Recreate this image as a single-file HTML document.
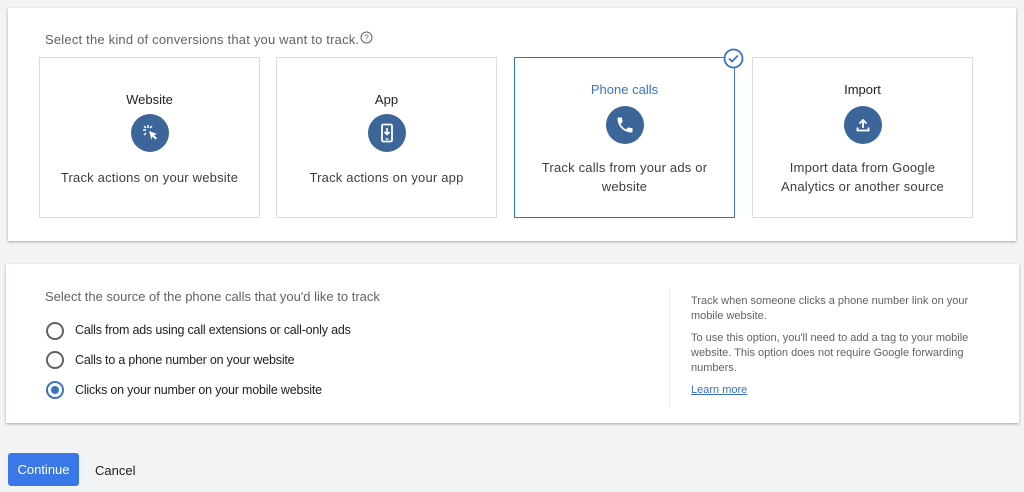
<!DOCTYPE html>
<html><head><style>
*{margin:0;padding:0;box-sizing:border-box}
body{width:1024px;height:492px;background:#f1f3f4;font-family:"Liberation Sans",Arial,sans-serif;position:relative;overflow:hidden;color:#3c4043}
.panel{position:absolute;background:#fff;box-shadow:0 1px 2px rgba(60,64,67,.3),0 1px 3px rgba(60,64,67,.15)}
.card{position:absolute;top:57px;width:221px;height:161px;border:1.5px solid #dadce0;text-align:center;background:#fff}
.card .t{position:absolute;left:0;right:0;font-size:13px;color:#202124}
.card .c{position:absolute;left:50%;margin-left:-19px;width:38px;height:38px;border-radius:50%;background:#3c6599}
.card .c svg{position:absolute;left:9px;top:9px}
.card .d{position:absolute;left:0;right:0;font-size:13px;color:#3c4043;line-height:19px;letter-spacing:.2px}
.r{position:absolute;left:46px;width:18px;height:18px;border:2px solid #5f6368;border-radius:50%}
.rl{position:absolute;left:75px;font-size:12.5px;color:#202124;letter-spacing:-.2px}
.side{position:absolute;left:691px;font-size:11px;color:#5f6368;line-height:15px;width:305px}
</style></head><body>
<div class="panel" style="left:8px;top:8px;width:1008px;height:233px"></div>
<div style="position:absolute;left:45px;top:32px;font-size:13px;color:#5f6368;letter-spacing:.2px">Select the kind of conversions that you want to track.</div>
<svg style="position:absolute;left:360px;top:31px" width="13" height="13" viewBox="0 0 13 13"><circle cx="6.5" cy="6.5" r="5.5" fill="none" stroke="#5f6368" stroke-width="1"/><text x="6.5" y="9.5" font-size="8" text-anchor="middle" fill="#5f6368" font-family="Liberation Sans">?</text></svg>

<div class="card" style="left:39px"><div class="t" style="top:34px">Website</div><div class="c" style="top:56px"><svg width="20" height="20" viewBox="0 0 20 20"><path d="M9 8l8 3-3 1 3 3-1.5 1.5-3-3-1 3z" fill="#fff"/><path d="M8 2v3M3 7h3M4 3l2 2M12 3l-2 2M4 12l2-2" stroke="#fff" stroke-width="1.5"/></svg></div><div class="d" style="top:110px">Track actions on your website</div></div>
<div class="card" style="left:276px"><div class="t" style="top:34px">App</div><div class="c" style="top:56px"><svg width="20" height="20" viewBox="0 0 20 20"><rect x="5" y="1.5" width="10" height="17" rx="1.5" fill="none" stroke="#fff" stroke-width="1.8"/><path d="M10 5v6M7.5 9l2.5 2.5 2.5-2.5" stroke="#fff" stroke-width="1.6" fill="none"/><path d="M8.5 16h3" stroke="#fff" stroke-width="1.2"/></svg></div><div class="d" style="top:110px">Track actions on your app</div></div>
<div class="card" style="left:514px;border:1.5px solid #3a72c4"><div class="t" style="top:24px;color:#3a72c4">Phone calls</div><div class="c" style="top:48px"><svg width="20" height="20" viewBox="0 0 24 24"><path d="M6.6 10.8c1.4 2.8 3.8 5.1 6.6 6.6l2.2-2.2c.3-.3.7-.4 1-.2 1.1.4 2.300.6 3.6.6.6 0 1 .4 1 1V20c0 .6-.4 1-1 1C10.6 21 3 13.4 3 4c0-.6.4-1 1-1h3.5c.6 0 1 .4 1 1 0 1.3.2 2.5.6 3.6.1.3 0 .7-.2 1z" fill="#fff"/></svg></div><div class="d" style="top:100px">Track calls from your ads or<br>website</div></div>
<svg style="position:absolute;left:723px;top:48px" width="21" height="21" viewBox="0 0 21 21"><circle cx="10.5" cy="10.5" r="9" fill="#fff" stroke="#3a72c4" stroke-width="1.8"/><path d="M6 10.5l3 3 6-6" stroke="#3a72c4" stroke-width="1.8" fill="none"/></svg>
<div class="card" style="left:752px"><div class="t" style="top:24px">Import</div><div class="c" style="top:48px"><svg width="20" height="20" viewBox="0 0 20 20"><path d="M10 13V5M6.5 8.5L10 5l3.5 3.5" stroke="#fff" stroke-width="1.8" fill="none"/><path d="M4.5 12.5v3h11v-3" stroke="#fff" stroke-width="1.8" fill="none"/></svg></div><div class="d" style="top:100px">Import data from Google<br>Analytics or another source</div></div>

<div class="panel" style="left:6px;top:264px;width:1013px;height:159px"></div>
<div style="position:absolute;left:45px;top:289px;font-size:13px;color:#5f6368">Select the source of the phone calls that you'd like to track</div>
<div class="r" style="top:322px"></div><div class="rl" style="top:323px">Calls from ads using call extensions or call-only ads</div>
<div class="r" style="top:351px"></div><div class="rl" style="top:353px">Calls to a phone number on your website</div>
<div class="r" style="top:381px;border-color:#3a72c4"><div style="position:absolute;left:3px;top:3px;width:8px;height:8px;border-radius:50%;background:#3a72c4"></div></div><div class="rl" style="top:383px">Clicks on your number on your mobile website</div>
<div style="position:absolute;left:669px;top:288px;width:1px;height:120px;background:#e8eaed"></div>
<div class="side" style="top:294px">Track when someone clicks a phone number link on your mobile website.</div>
<div class="side" style="top:331px">To use this option, you'll need to add a tag to your mobile website. This option does not require Google forwarding numbers.</div>
<div class="side" style="top:383px;color:#3a72c4;text-decoration:underline">Learn more</div>

<div style="position:absolute;left:8px;top:453px;width:71px;height:33px;background:#3b78e7;border-radius:3px;color:#fff;font-size:13px;line-height:33px;text-align:center">Continue</div>
<div style="position:absolute;left:95px;top:463px;font-size:13px;color:#202124">Cancel</div>
</body></html>
